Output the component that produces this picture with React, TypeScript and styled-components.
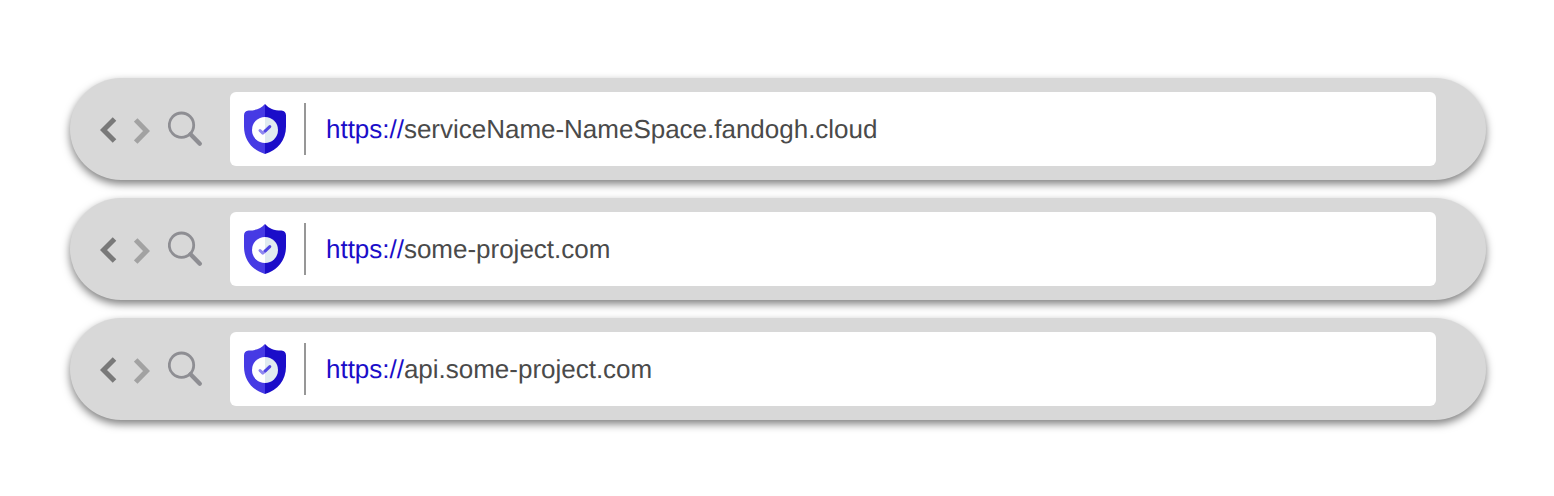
import React from 'react';
import styled, { createGlobalStyle } from 'styled-components';

const GlobalStyle = createGlobalStyle`
  * { box-sizing: border-box; }
  body { margin: 0; background: #fff; font-family: "Liberation Sans", Arial, sans-serif; }
`;

const Page = styled.main`
  display: flex;
  flex-direction: column;
  gap: 18px;
  height: 496px;
  padding: 78px 68px 0 70px;
`;

const Bar = styled.div`
  display: flex;
  align-items: center;
  height: 102px;
  padding: 0 50px 0 30px;
  border-radius: 51px;
  background: #d8d8d8;
  box-shadow: 0 4px 8px rgba(0, 0, 0, 0.5);
`;

const Controls = styled.div`
  display: flex;
  align-items: center;
  width: 130px;
  flex: none;
`;

const Chevron = styled.svg<{ $forward?: boolean }>`
  width: 17px;
  height: 28px;
  margin: ${p => (p.$forward ? '4px 17px 0 0' : '2px 17px 0 0')};
  fill: none;
  stroke: ${p => (p.$forward ? '#a2a2a2' : '#797979')};
  stroke-width: 5;
`;

const Search = styled.svg`
  width: 36px;
  height: 36px;
  fill: none;
  stroke: #8e8e93;
`;

const Address = styled.div`
  display: flex;
  align-items: center;
  flex: 1;
  height: 74px;
  padding-left: 14px;
  border-radius: 6px;
  background: #fff;
`;

const Shield = styled.svg`
  width: 42px;
  height: 50px;
  flex: none;
`;

const Divider = styled.span`
  width: 2px;
  height: 52px;
  margin: 0 20px 0 18px;
  background: #979797;
`;

const Url = styled.span`
  font-size: 26px;
  line-height: 30px;
  letter-spacing: -0.015px;
  text-rendering: geometricPrecision;
  color: #4a4a4a;
  white-space: nowrap;
`;

const Protocol = styled.span`
  color: #1b0dc9;
`;

const hosts = ['serviceName-NameSpace.fandogh.cloud', 'some-project.com', 'api.some-project.com'];

function ShieldIcon() {
  return (
    <Shield viewBox="0 0 42 50">
      <path fill="#463ae4" d="M21 0C17 4.6 12.2 6.4 4.6 6.6C1.5 6.7 0 8.6 0 11.5V22.5C0 36 8.2 46.3 21 50Z" />
      <path fill="#1b0dc9" d="M21 0C25 4.6 29.8 6.4 37.4 6.6C40.5 6.7 42 8.6 42 11.5V22.5C42 36 33.8 46.3 21 50Z" />
      <path fill="#fff" d="M21 13A13 13 0 0 0 21 39Z" />
      <path fill="#e1ebf0" d="M21 13A13 13 0 0 1 21 39Z" />
      <path fill="none" stroke="#8f88ef" strokeWidth="3" strokeLinecap="round" strokeLinejoin="round" d="M16 26.5L18.8 29.2L21 27.2" />
      <path fill="none" stroke="#5146e3" strokeWidth="3" strokeLinecap="round" d="M21.3 26.8L25.8 22.6" />
    </Shield>
  );
}

function BrowserBar({ host }: { host: string }) {
  return (
    <Bar>
      <Controls>
        <Chevron viewBox="0 0 17 28">
          <path d="M14.5 2.9L3.5 14L14.5 25.1" />
        </Chevron>
        <Chevron $forward viewBox="0 0 17 28">
          <path d="M1.7 2.9L12.5 14L1.7 25.1" />
        </Chevron>
        <Search viewBox="0 0 36 36">
          <circle cx="13.5" cy="14.2" r="12.2" strokeWidth="2.8" />
          <path d="M22.5 23.2L31.8 32.8" strokeWidth="4.3" strokeLinecap="round" />
        </Search>
      </Controls>
      <Address>
        <ShieldIcon />
        <Divider />
        <Url><Protocol>https://</Protocol>{host}</Url>
      </Address>
    </Bar>
  );
}

export default function App() {
  return (
    <>
      <GlobalStyle />
      <Page>
        {hosts.map(host => <BrowserBar key={host} host={host} />)}
      </Page>
    </>
  );
}
